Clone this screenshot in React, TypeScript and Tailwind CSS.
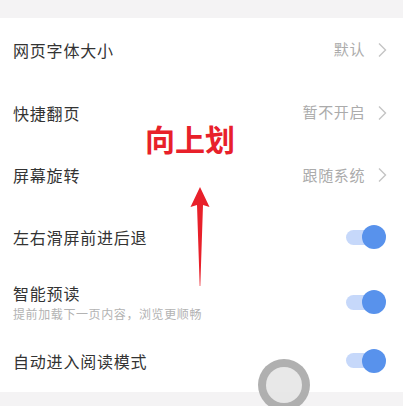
import React from "react";

const font = { fontFamily: '"Noto Sans CJK SC", "Noto Sans", sans-serif' };

function Chevron() {
  return (
    <svg width="10" height="16" viewBox="0 0 10 16" className="ml-[12px]">
      <path d="M2 1.5 L8.5 8 L2 14.5" fill="none" stroke="#c4c4c4" strokeWidth="1.4" />
    </svg>
  );
}

function Toggle() {
  return (
    <div className="relative w-[40px] h-[24px] flex items-center">
      <div className="w-[30px] h-[15px] rounded-full bg-[#c6d8fa]" />
      <div className="absolute right-0 top-[0px] w-[24px] h-[24px] rounded-full bg-[#5892ec]" />
    </div>
  );
}

function NavRow({ title, value, h }: { title: string; value: string; h: string }) {
  return (
    <div className={`flex items-center justify-between pl-[13px] pr-[16px] ${h}`}>
      <span className="text-[16px] tracking-[0.8px] text-[#333333]">{title}</span>
      <div className="flex items-center">
        <span className="text-[15px] tracking-[0.6px] text-[#ababab]">{value}</span>
        <Chevron />
      </div>
    </div>
  );
}

export default function App() {
  return (
    <div className="relative w-[403px] h-[406px] overflow-hidden bg-white" style={font}>
      <div className="h-[18px] bg-[#f4f3f4]" />
      <div className="flex flex-col">
        <NavRow title="网页字体大小" value="默认" h="h-[63px]" />
        <NavRow title="快捷翻页" value="暂不开启" h="h-[63px]" />
        <NavRow title="屏幕旋转" value="跟随系统" h="h-[62px]" />
        <div className="flex items-center justify-between pl-[13px] pr-[17px] h-[62px]">
          <span className="text-[16px] tracking-[0.8px] text-[#333333]">左右滑屏前进后退</span>
          <Toggle />
        </div>
        <div className="flex items-center justify-between pl-[13px] pr-[17px] h-[68px]">
          <div className="flex flex-col">
            <span className="text-[16px] tracking-[0.8px] text-[#333333] leading-[22px]">智能预读</span>
            <span className="text-[12px] tracking-[0.6px] text-[#b3b3b3] leading-[18px] mt-[1px]">
              提前加载下一页内容，浏览更顺畅
            </span>
          </div>
          <Toggle />
        </div>
        <div className="flex items-center justify-between pl-[13px] pr-[17px] h-[56px] pb-[7px]">
          <span className="text-[16px] tracking-[0.8px] text-[#333333]">自动进入阅读模式</span>
          <Toggle />
        </div>
      </div>
      <div className="h-[30px] bg-[#f4f3f4]" />

      <div className="absolute left-[145px] top-[120px] text-[30px] leading-[36px] font-bold text-[#e8202a] tracking-[0px]">
        向上划
      </div>
      <svg className="absolute left-[189px] top-[186px]" width="22" height="102" viewBox="0 0 22 102">
        <path d="M11 1 L20.5 21 L14 19 L11.3 100 L10.7 100 L8 19 L1.5 21 Z" fill="#e8202a" />
      </svg>

      <div className="absolute left-[258px] top-[359px] w-[52px] h-[52px] rounded-full bg-[#a8a8a8] flex items-center justify-center opacity-90">
        <div className="w-[36px] h-[36px] rounded-full bg-[#e6e6e6]" />
      </div>
    </div>
  );
}
